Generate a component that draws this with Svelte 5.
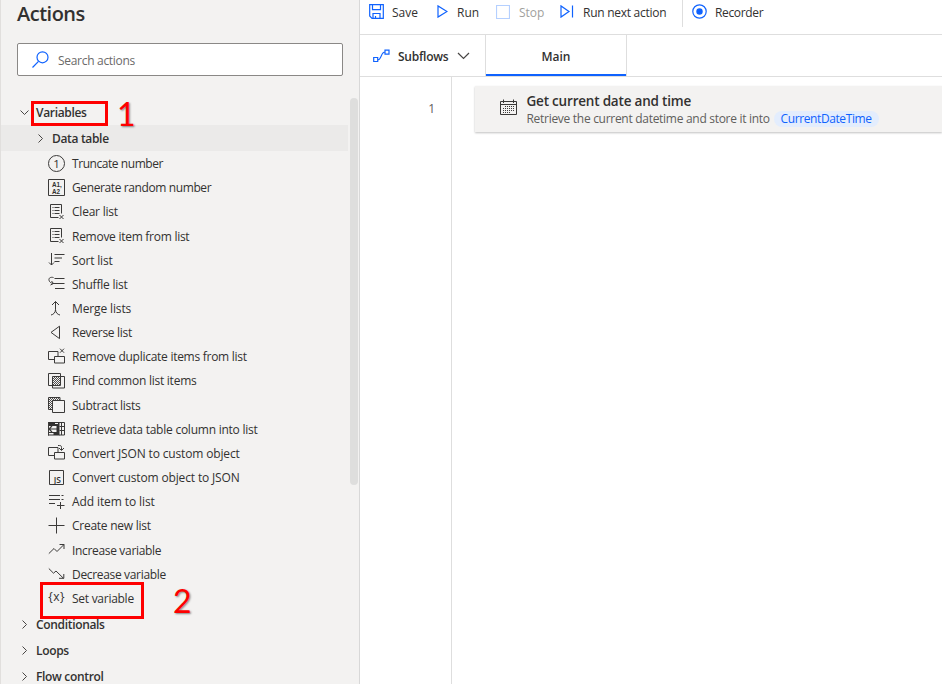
<script lang="ts">
  type Action = {
    label: string;
    d?: string;
    glyph?: string;
    spacing: number;
  };

  const listWithCross = 'M10.5 14.5h-8V1.5h11v9M4.5 4.5h1m1 0h5M4.5 7.5h1m1 0h5M4.5 10.5h1m1 0h5M11.5 12l4 4m0-4l-4 4';

  const actions: Action[] = [
    { label: 'Truncate number', spacing: -0.44, glyph: 'one', d: 'M8.5.5a8 8 0 1 1 0 16a8 8 0 1 1 0-16' },
    { label: 'Generate random number', spacing: -0.39, glyph: 'random', d: 'M.5.5h16v16H.5z' },
    { label: 'Clear list', spacing: -0.22, d: listWithCross },
    { label: 'Remove item from list', spacing: -0.27, d: listWithCross },
    { label: 'Sort list', spacing: -0.18, d: 'M3.5 2v12M1 11.5L3.5 14L6 11.5M6.5 3.5h10M6.5 7h7.5M6.5 10.5h5' },
    { label: 'Shuffle list', spacing: -0.23, d: 'M6.5 3.5h10M5 8.5h11.5M7 13.5h9.500M5.500 2.500C2.500 1.800.500 3 1 5.200C1.400 7.200 3 8 5 8.500M3.500 6l2 2.500l-3 1.500' },
    { label: 'Merge lists', spacing: -0.13, d: 'M7.5 1.5v8c0 3-2 5-4.5 5.5M7.5 9.5c0 3 2 5 4.5 5.5M4 5l3.5-3.5L11 5' },
    { label: 'Reverse list', spacing: -0.28, d: 'M11.5 2.2v12.400L3 8.400z' },
    { label: 'Remove duplicate items from list', spacing: -0.27, d: 'M6.5 11.5h-6v-8h9.500v4.500M6.500 8.500h10v6.500h-10zM12 .700l4 4m0-4l-4 4' },
    { label: 'Find common list items', spacing: -0.25, glyph: 'common', d: 'M.5 1.5h12v12H.5zM4.5 4.5h12v11.5h-12z' },
    { label: 'Subtract lists', spacing: -0.25, glyph: 'subtract', d: 'M.5 1.5h11.5v12H.5z' },
    { label: 'Retrieve data table column into list', spacing: -0.24, glyph: 'column' },
    { label: 'Convert JSON to custom object', spacing: -0.15, d: 'M6.5 11.5h-6v-8h9.5v4.5M6.5 8.5h10v6.5h-10zM10 1.5h1.5c1.5 0 2 .5 2 2V6M11 4l2.5 2.5L16 4' },
    { label: 'Convert custom object to JSON', spacing: -0.15, glyph: 'js', d: 'M1.5 1.5h14v14h-14z' },
    { label: 'Add item to list', spacing: -0.1, d: 'M1 2.5h11m1.5 0h2M1 6.5h11m1.5 0h2M1 10.5h6M9 12.5h7.5M12.5 9v7' },
    { label: 'Create new list', spacing: -0.26, d: 'M.5 8.5h16M8.5.5v16' },
    { label: 'Increase variable', spacing: -0.33, d: 'M.8 12.6L6 7.5l3 3l7-7M11.5 3.5h4.5v4.5' },
    { label: 'Decrease variable', spacing: -0.33, d: 'M.8 3.5L5.5 8.2L8 6l7.5 7.3M11 13.3h4.8V9' },
    { label: 'Set variable', spacing: -0.27, glyph: 'braces' }
  ];

  const groups = ['Conditionals', 'Loops', 'Flow control'];
</script>

<div class="designer">
  <aside class="actions-pane">
    <h1>Actions</h1>
    <div class="search">
      <svg width="17" height="17" viewBox="0 0 17 17">
        <circle cx="10.5" cy="6.3" r="5.5" />
        <path d="M6.5 10.3L.5 16.5" />
      </svg>
      <span>Search actions</span>
    </div>

    <div class="tree">
      <div class="group">
        <svg class="chevron" width="9" height="9" viewBox="0 0 9 9"><path d="M.5 2.5l4 4l4-4" /></svg>
        <span>Variables</span>
      </div>
      <div class="group nested">
        <svg class="chevron" width="9" height="9" viewBox="0 0 9 9"><path d="M2.5.5l4 4l-4 4" /></svg>
        <span>Data table</span>
      </div>
      {#each actions as action}
        <div class="action">
          <svg width="17" height="17" viewBox="0 0 17 17">
            {#if action.d}<path d={action.d} />{/if}
            {#if action.glyph === 'one'}
              <text x="8.5" y="12.700" font-size="11.5">1</text>
            {:else if action.glyph === 'random'}
              <text class="tiny" x="8.8" y="7.6" font-size="6.3">A1,</text>
              <text class="tiny" x="8" y="15" font-size="6.3">A2</text>
            {:else if action.glyph === 'common'}
              <path class="hatch" d="M5 7l2-2M5 9l4-4M5 11l6-6M5 13l7.500-7.500M7 13l5.500-5.500M9 13l3.500-3.500M11 13l1.500-1.500" />
            {:else if action.glyph === 'subtract'}
              <path class="hatch" d="M1 4l2-2M1 6l4-4M1 8l6-6M1 10l8-8M1 12l10-10M2 13l10-10" />
              <path class="front" d="M4.500 4.500h12v12h-12z" />
            {:else if action.glyph === 'column'}
              <path class="solid" d="M0 2h11.500v13.500H0z" />
              <path class="cell" d="M1 6h7.500v6H1zM1 13h4.500v1.500H1zM7 3h3v1H7zM12 3h2v2.500h-2z" />
              <path d="M11 2.500h5.500v12.500H11M13.500 2.500v12.500M11.500 6.500h5M11.500 10.500h5M.5 2v13.500" />
              <path class="thick" d="M1 9h8.500M4 6l-3 3l3 3" />
            {:else if action.glyph === 'js'}
              <text x="9.300" y="13.8" font-size="8.5" class="js">JS</text>
            {:else if action.glyph === 'braces'}
              <text class="braces" x="8.7" y="11.500" font-size="12">{'{x}'}</text>
            {/if}
          </svg>
          <span style="letter-spacing: {action.spacing}px">{action.label}</span>
        </div>
      {/each}
      {#each groups as group}
        <div class="group">
          <svg class="chevron" width="9" height="9" viewBox="0 0 9 9"><path d="M2.5.5l4 4l-4 4" /></svg>
          <span>{group}</span>
        </div>
      {/each}
    </div>
    <div class="scrollbar"></div>
    <div class="mark mark-variables"></div>
    <div class="step step-one">1</div>
    <div class="mark mark-set"></div>
    <div class="step step-two">2</div>
  </aside>

  <main>
    <div class="toolbar">
      <div class="tool save">
        <svg width="15" height="15" viewBox="0 0 15 15"><path d="M.7.7h13.6v13.6H3L.7 12zM3.5.7v5h8v-5M4 14v-4.500h7V14M6.500 14v-2" /></svg>
        <span>Save</span>
      </div>
      <div class="tool run">
        <svg width="11" height="13" viewBox="0 0 11 13"><path d="M1 .9v11.2L10 6.5z" /></svg>
        <span>Run</span>
      </div>
      <div class="tool stop">
        <svg width="14" height="14" viewBox="0 0 14 14"><path d="M.5.5h13v13H.5z" /></svg>
        <span>Stop</span>
      </div>
      <div class="tool next">
        <svg width="14" height="13" viewBox="0 0 14 13"><path d="M1 .9v11.2L9 6.5zM12.5.5v12" /></svg>
        <span>Run next action</span>
      </div>
      <div class="tool recorder">
        <svg width="15" height="15" viewBox="0 0 15 15"><circle cx="7.5" cy="7.5" r="6.7" /><circle class="dot" cx="7.5" cy="7.5" r="3.2" /></svg>
        <span>Recorder</span>
      </div>
    </div>

    <div class="tabs">
      <div class="subflows">
        <svg width="17" height="14" viewBox="0 0 17 14"><path d="M.7 8.5h4v4h-4zM12 1.2h4v4h-4zM4.7 11c4 0 3-8 7.3-8" /></svg>
        <span>Subflows</span>
        <svg class="arrow" width="13" height="8" viewBox="0 0 13 8"><path d="M1 1l5.5 5.5L12 1" /></svg>
      </div>
      <div class="tab">Main</div>
    </div>

    <div class="flow">
      <div class="gutter">1</div>
      <div class="card">
        <svg width="17" height="17" viewBox="0 0 17 17">
          <path d="M.5 2.5h16v13H.5zM.5 5.5h16M3.5.5v3.5M13.5.5v3.5" />
          <path class="days" d="M5 7.5h10M3 9.5h12M3 11.5h12M3 13.5h8" />
        </svg>
        <div class="card-text">
          <div class="card-title">Get current date and time</div>
          <div class="card-detail">Retrieve the current datetime and store it into <span class="variable">CurrentDateTime</span></div>
        </div>
      </div>
    </div>
  </main>
</div>

<style>
  .designer {
    display: flex;
    width: 942px;
    height: 684px;
    overflow: hidden;
    background: #fff;
    color: #323130;
    font-family: 'Open Sans', 'Noto Sans', sans-serif;
    font-size: 12px;
    white-space: nowrap;
  }

  svg {
    flex: none;
    fill: none;
    stroke: #0f62fe;
    stroke-width: 1.2;
  }

  .actions-pane {
    position: relative;
    box-sizing: border-box;
    width: 360px;
    height: 684px;
    flex: none;
    overflow: hidden;
    background: #f3f2f1;
    border-left: 1px solid #e1dfdd;
    border-right: 1px solid #d8d8d8;
  }

  h1 {
    height: 28px;
    margin: 0 0 15px 16px;
    font-size: 20px;
    font-weight: 600;
    line-height: 28px;
    letter-spacing: -0.5px;
  }

  .search {
    display: flex;
    align-items: center;
    box-sizing: border-box;
    width: 326px;
    height: 33px;
    margin-left: 16px;
    padding-left: 14px;
    gap: 9px;
    background: #fff;
    border: 1px solid #8a8886;
    border-radius: 2px;
    color: #6b6a69;
    letter-spacing: -0.3px;
  }

  .search span {
    padding-top: 1px;
  }

  .tree {
    margin-top: 23px;
  }

  .group {
    display: flex;
    align-items: center;
    height: 26px;
    padding-left: 19px;
    gap: 7px;
    font-weight: 600;
    letter-spacing: -0.33px;
  }

  .nested {
    width: 312px;
    padding-left: 35px;
    background: #ebeae9;
  }

  .chevron {
    stroke: #484644;
    stroke-width: 1;
  }

  .action {
    display: flex;
    align-items: center;
    height: 24.17px;
    padding-left: 47px;
    gap: 7px;
  }

  .action span {
    padding-top: 1px;
  }

  .action:nth-last-child(4) {
    margin-bottom: 1.5px;
  }

  .action svg {
    stroke: #3b3a39;
    stroke-width: 1;
    overflow: visible;
  }

  .action text {
    fill: #323130;
    stroke: none;
    text-anchor: middle;
    letter-spacing: 0;
  }

  .action .tiny {
    font-family: 'Liberation Sans', sans-serif;
    font-weight: 700;
  }

  .action .js {
    font-weight: 600;
  }

  .action .braces {
    letter-spacing: 0.6px;
  }

  .action .hatch {
    stroke-width: 0.9;
  }

  .action .front,
  .action .cell {
    fill: #f3f2f1;
  }

  .action .cell {
    stroke: none;
  }

  .action .solid {
    fill: #323130;
    stroke: none;
  }

  .action .thick {
    stroke-width: 1.2;
  }

  .scrollbar {
    position: absolute;
    top: 98px;
    right: 1px;
    width: 8px;
    height: 387px;
    border-radius: 4px;
    background: #dededd;
  }

  .mark {
    position: absolute;
    box-sizing: border-box;
    border: 3px solid #fe0000;
  }

  .mark-variables {
    top: 101px;
    left: 30px;
    width: 77px;
    height: 25px;
  }

  .mark-set {
    top: 582px;
    left: 39px;
    width: 104px;
    height: 37px;
  }

  .step {
    position: absolute;
    color: #fe0000;
    font-family: Lato, sans-serif;
    font-size: 32px;
    line-height: 38px;
    text-shadow: 1px 1px 2px rgba(0, 0, 0, 0.45);
  }

  .step-one {
    top: 95px;
    left: 116px;
  }

  .step-two {
    top: 582px;
    left: 172px;
  }

  main {
    flex: 1;
    min-width: 0;
  }

  .toolbar {
    display: flex;
    box-sizing: border-box;
    height: 35px;
    border-bottom: 1px solid #dedede;
  }

  .tool {
    display: flex;
    align-items: center;
    box-sizing: border-box;
    height: 23px;
  }

  .tool span {
    padding-top: 1px;
  }

  .save {
    width: 77px;
    padding-left: 9px;
    gap: 8px;
  }

  .run {
    width: 59px;
    gap: 9px;
  }

  .stop {
    width: 64px;
    gap: 9px;
    color: #a19f9d;
  }

  .stop svg {
    stroke: #b5d0ff;
  }

  .next {
    width: 122px;
    gap: 9px;
    letter-spacing: -0.27px;
  }

  .recorder {
    height: 27px;
    padding: 0 0 4px 9px;
    gap: 8px;
    border-left: 1px solid #dedede;
    letter-spacing: -0.35px;
  }

  .dot {
    fill: #0f62fe;
    stroke: none;
  }

  .tabs {
    display: flex;
    box-sizing: border-box;
    height: 42px;
    border-bottom: 1px solid #dedede;
    font-weight: 600;
  }

  .subflows {
    display: flex;
    align-items: center;
    box-sizing: border-box;
    width: 125px;
    padding-left: 13px;
    gap: 8px;
    letter-spacing: -0.25px;
  }

  .subflows span {
    padding-top: 1px;
  }

  .arrow {
    margin-left: 1px;
    stroke: #484644;
  }

  .tab {
    box-sizing: border-box;
    width: 142px;
    height: 41px;
    line-height: 43px;
    text-align: center;
    border: solid #dedede;
    border-width: 0 1px;
    box-shadow: inset 0 -2px #0f62fe;
  }

  .flow {
    display: flex;
    height: 607px;
  }

  .gutter {
    box-sizing: border-box;
    width: 92px;
    padding: 23px 16px 0 0;
    border-right: 1px solid #dedede;
    color: #605e5c;
    text-align: right;
  }

  .card {
    display: flex;
    box-sizing: border-box;
    flex: 1;
    height: 46px;
    margin: 9px 0 0 23px;
    padding: 5px 0 0 25px;
    gap: 9.5px;
    background: #f3f2f1;
    box-shadow: 0 1px 2px rgba(0, 0, 0, 0.25);
  }

  .card svg {
    margin-top: 8px;
    stroke: #3b3a39;
    stroke-width: 1;
  }

  .card .days {
    stroke-dasharray: 1 1;
  }

  .card-title {
    height: 19px;
    font-size: 13.5px;
    font-weight: 600;
    line-height: 20px;
    letter-spacing: -0.2px;
  }

  .card-detail {
    color: #605e5c;
    line-height: 17px;
    letter-spacing: -0.29px;
  }

  .variable {
    display: inline-block;
    height: 16px;
    margin-left: 1px;
    padding: 0 7px;
    border-radius: 8px;
    background: #e3edfd;
    color: #0f62fe;
    line-height: 16px;
    letter-spacing: -0.4px;
  }
</style>
